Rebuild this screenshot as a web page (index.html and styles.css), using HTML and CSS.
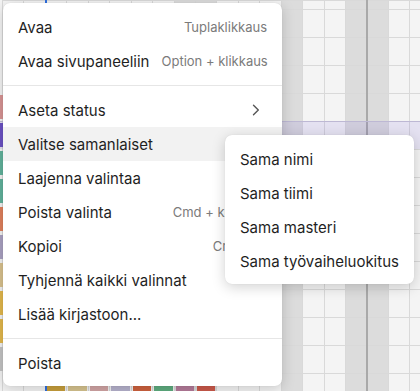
FILE: index.html
```html
<!DOCTYPE html>
<html lang="fi">

<head>
    <meta charset="utf-8">
    <title>Kontekstivalikko</title>
    <link rel="stylesheet" href="styles.css">
</head>

<body>

    <!--timeline background start-->
    <div class="board">
        <div class="cols">
            <div class="col"></div>
            <div class="col"></div>
            <div class="col today"></div>
            <div class="col"></div>
            <div class="col"></div>
            <div class="col"></div>
            <div class="col"></div>
            <div class="col"></div>
            <div class="col off"></div>
            <div class="col off"></div>
            <div class="col"></div>
            <div class="col"></div>
            <div class="col"></div>
            <div class="col off"></div>
            <div class="col"></div>
            <div class="col"></div>
            <div class="col off"></div>
            <div class="col off week"></div>
            <div class="col"></div>
            <div class="col"></div>
        </div>

        <div class="row-selected"></div>

        <span class="strip r5 pink"></span>
        <span class="strip r6 purple"></span>
        <span class="strip r7 teal"></span>
        <span class="strip r8 teal"></span>
        <span class="strip r9 orange"></span>
        <span class="strip r10 lilac"></span>
        <span class="strip r11 tan"></span>
        <span class="strip r12 yellow"></span>
        <span class="strip r13 yellow"></span>
        <span class="strip r14 grey"></span>

        <span class="bar c3 ochre"></span>
        <span class="bar c4 sand"></span>
        <span class="bar c5 rose"></span>
        <span class="bar c6 haze"></span>
        <span class="bar c7 rust"></span>
        <span class="bar c8 green"></span>
        <span class="bar c9 mauve"></span>
        <span class="bar c10 red"></span>
    </div>
    <!--timeline background end-->

    <!--context menu start-->
    <div class="menu">
        <div class="item"><span>Avaa</span><span class="key">Tuplaklikkaus</span></div>
        <div class="item"><span>Avaa sivupaneeliin</span><span class="key">Option + klikkaus</span></div>
        <div class="sep"></div>
        <div class="item">
            <span>Aseta status</span>
            <svg class="chev" width="8" height="12" viewBox="0 0 8 12">
                <path d="M1.5 1.2 L6.3 6 L1.5 10.8" fill="none" stroke="#555" stroke-width="1.4" stroke-linecap="round" stroke-linejoin="round"/>
            </svg>
        </div>
        <div class="item active"><span>Valitse samanlaiset</span></div>
        <div class="item"><span>Laajenna valintaa</span></div>
        <div class="item"><span>Poista valinta</span><span class="key">Cmd + klikkaus</span></div>
        <div class="item"><span>Kopioi</span><span class="key">Cmd + C</span></div>
        <div class="item"><span>Tyhjennä kaikki valinnat</span></div>
        <div class="item"><span>Lisää kirjastoon...</span></div>
        <div class="sep"></div>
        <div class="item"><span>Poista</span></div>
    </div>

    <div class="menu submenu">
        <div class="item"><span>Sama nimi</span></div>
        <div class="item"><span>Sama tiimi</span></div>
        <div class="item"><span>Sama masteri</span></div>
        <div class="item"><span>Sama työvaiheluokitus</span></div>
    </div>
    <!--context menu end-->

</body>

</html>
```

FILE: styles.css
```css
* {
    margin: 0;
    padding: 0;
    box-sizing: border-box;
}

body {
    width: 420px;
    height: 391px;
    overflow: hidden;
    position: relative;
    background: #f4f4f4;
    font-family: 'Inter', 'Noto Sans', sans-serif;
}

/* timeline */
.board {
    display: grid;
    grid-template-columns: 2px repeat(20, 21.45px);
    grid-template-rows: 9px repeat(14, 28px);
    height: 391px;
    overflow: hidden;
}

.cols {
    grid-column: 2 / -1;
    grid-row: 1 / -1;
    display: flex;
}

.col {
    flex: 0 0 21.45px;
    background-color: #f4f4f4;
    background-image: repeating-linear-gradient(to bottom, #d9d9d9 0 1px, transparent 1px 28px);
    background-position: 0 9px;
    border-left: 1px solid #d9d9d9;
}

.col.off {
    background-color: #dcdcdc;
}

.col.today {
    border-left: 2px solid #2f6fe0;
}

.col.week {
    border-left: 2px solid #a9a9a9;
}

.row-selected {
    grid-column: 1 / -1;
    grid-row: 6;
    background: rgba(112, 92, 225, 0.12);
    border-top: 1px solid #bdb8d4;
    z-index: 1;
}

.strip {
    grid-column: 1;
    width: 3px;
    margin: 2px 0;
    z-index: 2;
}

.r5 { grid-row: 5; }
.r6 { grid-row: 6; }
.r7 { grid-row: 7; }
.r8 { grid-row: 8; }
.r9 { grid-row: 9; }
.r10 { grid-row: 10; }
.r11 { grid-row: 11; }
.r12 { grid-row: 12; }
.r13 { grid-row: 13; }
.r14 { grid-row: 14; }

.pink { background: #d89595; }
.purple { background: #6b52c4; }
.teal { background: #62b39c; }
.orange { background: #e0815d; }
.lilac { background: #aaa2c2; }
.tan { background: #d9c28e; }
.yellow { background: #e3b84c; }
.grey { background: #c4c4c4; }

.bar {
    grid-row: 15;
    margin: 4px 1px 0 2px;
    z-index: 2;
}

.c3 { grid-column: 4; }
.c4 { grid-column: 5; }
.c5 { grid-column: 6; }
.c6 { grid-column: 7; }
.c7 { grid-column: 8; }
.c8 { grid-column: 9; }
.c9 { grid-column: 10; }
.c10 { grid-column: 11; }

.ochre { background: #c9a03c; }
.sand { background: #d8c590; }
.rose { background: #d3a6a6; }
.haze { background: #b8b4cf; }
.rust { background: #d0633f; }
.green { background: #5fae80; }
.mauve { background: #b67c9b; }
.red { background: #cd5a4b; }

/* context menu */
.menu {
    position: absolute;
    left: 3px;
    top: 3px;
    width: 279px;
    padding: 7px 0 6px;
    background: #fff;
    border-radius: 7px;
    box-shadow: 0 3px 14px rgba(0, 0, 0, 0.18), 0 0 1px rgba(0, 0, 0, 0.12);
    z-index: 5;
}

.submenu {
    left: 225px;
    top: 135px;
    width: auto;
    z-index: 6;
}

.item {
    height: 34px;
    padding: 0 15px;
    display: flex;
    align-items: center;
    justify-content: space-between;
    gap: 12px;
    font-size: 15px;
    color: #1f1f1f;
    white-space: nowrap;
}

.item.active {
    background: #f2f2f2;
}

.key {
    font-size: 13px;
    color: #7b7b7b;
}

.chev {
    margin-right: 7px;
}

.sep {
    height: 1px;
    margin: 7px 0;
    background: #e6e6e6;
}
```
